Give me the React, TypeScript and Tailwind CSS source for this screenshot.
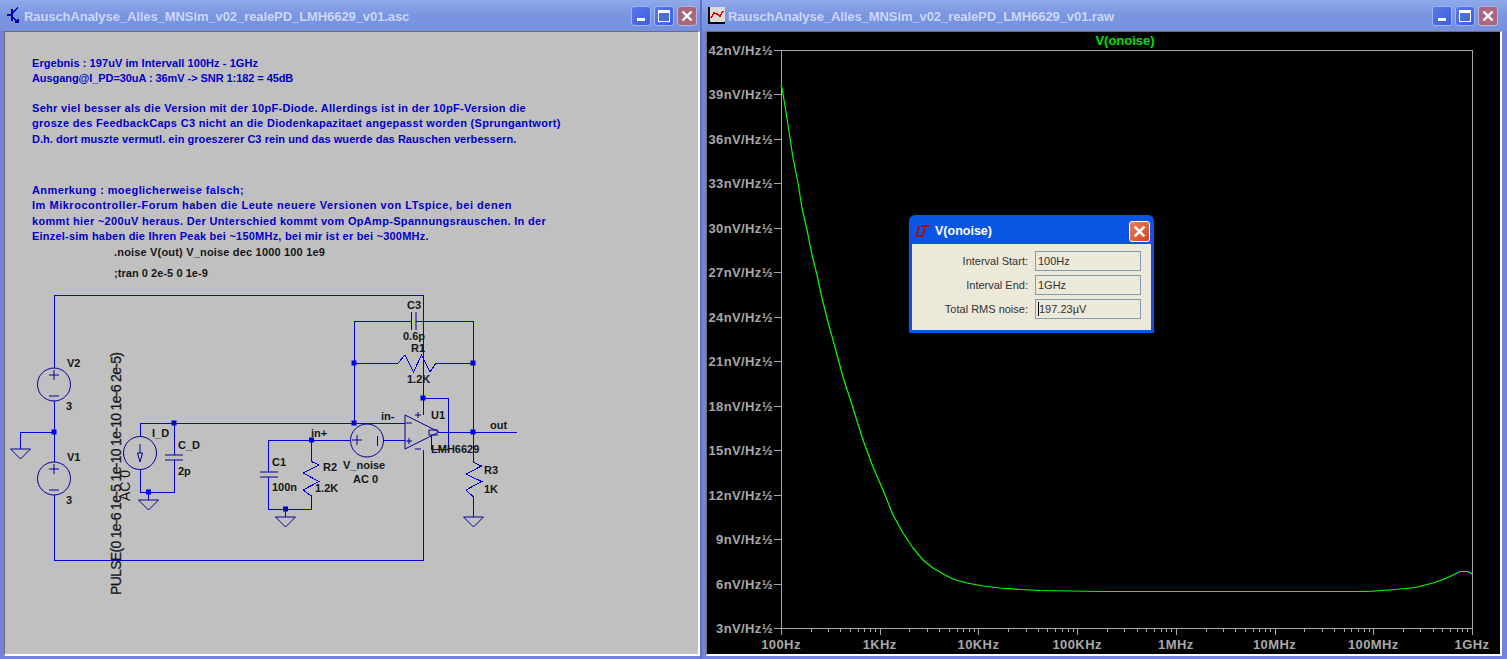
const wire = '#0000e0';
const sym = '#000099';

function CloseGlyph({ size = 12 }: { size?: number }) {
  return (
    <svg width={size} height={size} viewBox="0 0 12 12">
      <path d="M1.5 1.5L10.5 10.5M10.5 1.5L1.5 10.5" stroke="#fff" strokeWidth="2.4" />
    </svg>
  );
}

function CaptionButtons() {
  return (
    <div className="flex gap-[3px] shrink-0">
      <div className="w-[20px] h-[20px] rounded-[3px] border border-[#9db4ee] bg-gradient-to-br from-[#5a78e6] to-[#3c5fdc] flex items-end pl-[5px] pb-[4px]">
        <div className="w-[8px] h-[3px] bg-white" />
      </div>
      <div className="w-[20px] h-[20px] rounded-[3px] border border-[#9db4ee] bg-gradient-to-br from-[#5a78e6] to-[#3c5fdc] flex items-center justify-center">
        <div className="w-[12px] h-[12px] border border-white border-t-[3px]" />
      </div>
      <div className="w-[20px] h-[20px] rounded-[3px] border border-[#b9b4dc] bg-[#a9677f] flex items-center justify-center">
        <CloseGlyph />
      </div>
    </div>
  );
}

function SchematicIcon() {
  return (
    <svg width="14" height="17" viewBox="0 0 14 17" className="shrink-0" shapeRendering="crispEdges">
      <path d="M1 8H6M6 2V14M6 6L12 1M6 10L12 15M9 15H12V12" stroke="#0000a8" strokeWidth="1.4" fill="none" />
    </svg>
  );
}

function PlotIcon() {
  return (
    <svg width="17" height="17" viewBox="0 0 17 17" className="shrink-0" shapeRendering="crispEdges">
      <rect x="1" y="0" width="16" height="15" fill="#dcdcdc" />
      <path d="M1 0V16H17" stroke="#000" strokeWidth="1.2" fill="none" />
      <path d="M1 3V4M1 7V8M1 11V12M4 15V17M7 15V17M10 15V17M13 15V17" stroke="#000" />
      <path d="M3 11L6 6L9 7L12 9L15 4" stroke="#e00000" strokeWidth="1.6" fill="none" />
    </svg>
  );
}

function TitleBar({ icon, title, gap }: { icon: React.ReactNode; title: string; gap: string }) {
  return (
    <div className={`h-[31px] shrink-0 flex items-center ${gap} bg-gradient-to-b from-[#8fa9ea] via-[#7a95e1] to-[#7690df]`}>
      {icon}
      <span className="text-[13px] font-bold tracking-[-0.08px] text-[#cdd6f6] font-['Liberation_Sans',sans-serif] whitespace-nowrap pt-[3px]">
        {title}
      </span>
      <div className="flex-1" />
      <CaptionButtons />
    </div>
  );
}

function Gnd({ x, y }: { x: number; y: number }) {
  return <path d={`M${x - 10} ${y}H${x + 10}L${x} ${y + 10}Z`} fill="none" stroke={sym} />;
}

function Dot({ x, y }: { x: number; y: number }) {
  return <rect x={x - 2.5} y={y - 2.5} width="5" height="5" fill={wire} />;
}

function Lbl({ x, y, children }: { x: number; y: number; children: string }) {
  return (
    <text x={x} y={y} fontSize="11" fontWeight="700" fill="#161616" fontFamily="'Liberation Sans', sans-serif">
      {children}
    </text>
  );
}

function Schematic() {
  const wires = [
    'M54 295H423V415M423 450V560H54V495M54 401V462M54 295V368',
    'M54 432H20V449',
    'M140 437V423H405M174 423V455M174 460V492H140V469M148.5 492V500',
    'M350 440H268V472M268 477V509H311.5V496L303 490L319 481.5L303 473L319 465L311.5 461.5V440M285.5 509V517',
    'M383 440H405M439 432H517',
    'M354 423V321H411.5M416 321H473V462L481.5 466L466 474L481.5 481.5L466 490L473 496.5V517',
    'M354 363H398L405 355L413.5 372L421.5 355L430 372L436 363H473',
    'M431.5 435V449H448V398H423',
  ];
  return (
    <svg viewBox="5 285 693 369" width="693" height="369" className="block">
      <g shapeRendering="crispEdges">
        {wires.map((d, i) => (
          <path key={i} d={d} fill="none" stroke={wire} strokeWidth="1" />
        ))}
      </g>
      <g fill="none" stroke={sym}>
        <circle cx="54" cy="384.5" r="16.5" />
        <path d="M49 375H59M54 370V380M49 396H59" />
        <circle cx="54" cy="478.5" r="16.5" />
        <path d="M49 469H59M54 464V474M49 490H59" />
        <circle cx="140" cy="453" r="16.5" />
        <path d="M140 444V453M137.5 453H142.5L140 462Z" />
        <path d="M165 455H183M165 460H183" />
        <path d="M260 472H278M260 477H278" />
        <path d="M411.5 312V330M416 312V330" />
        <circle cx="367" cy="440.5" r="16.5" />
        <path d="M352 440H362M357 435V445M377.5 436V446" />
        <path d="M405 415V449L439 432Z" />
        <path d="M406 423H412M406 441H412M409 438V444M415 415H421M418 412V418M415 449H421" />
        <path d="M438 430H429V435H438" />
      </g>
      <Gnd x={20.5} y={449} />
      <Gnd x={148.5} y={500} />
      <Gnd x={285.5} y={517} />
      <Gnd x={473.5} y={517} />
      {[
        [54, 432],
        [174, 423],
        [148.5, 492],
        [311.5, 440],
        [285.5, 509],
        [354, 363],
        [354, 423],
        [473, 363],
        [473, 432],
        [423, 398],
      ].map(([x, y]) => (
        <Dot key={`${x}-${y}`} x={x} y={y} />
      ))}
      <Lbl x={67} y={367}>V2</Lbl>
      <Lbl x={66} y={410}>3</Lbl>
      <Lbl x={67} y={461}>V1</Lbl>
      <Lbl x={66} y={504}>3</Lbl>
      <Lbl x={152} y={437}>I_D</Lbl>
      <Lbl x={178} y={449}>C_D</Lbl>
      <Lbl x={178} y={475}>2p</Lbl>
      <Lbl x={272} y={466}>C1</Lbl>
      <Lbl x={272} y={491}>100n</Lbl>
      <Lbl x={323} y={471}>R2</Lbl>
      <Lbl x={315} y={492}>1.2K</Lbl>
      <Lbl x={311} y={437}>in+</Lbl>
      <Lbl x={343} y={469}>V_noise</Lbl>
      <Lbl x={353} y={483}>AC 0</Lbl>
      <Lbl x={381} y={420}>in-</Lbl>
      <Lbl x={407} y={309}>C3</Lbl>
      <Lbl x={403} y={340}>0.6p</Lbl>
      <Lbl x={411} y={352}>R1</Lbl>
      <Lbl x={407} y={383}>1.2K</Lbl>
      <Lbl x={431} y={419}>U1</Lbl>
      <Lbl x={431} y={453}>LMH6629</Lbl>
      <Lbl x={490} y={429}>out</Lbl>
      <Lbl x={484} y={474}>R3</Lbl>
      <Lbl x={484} y={493}>1K</Lbl>
      <text
        transform="translate(121 595) rotate(-90)"
        fontSize="14"
        fill="#161616"
        stroke="#161616"
        strokeWidth="0.25"
        fontFamily="'Liberation Sans', sans-serif"
        textLength="243"
      >
        PULSE(0 1e-6 1e-5 1e-10 1e-10 1e-6 2e-5)
      </text>
      <text
        transform="translate(130 501) rotate(-90)"
        fontSize="14"
        fill="#161616"
        fontFamily="'Liberation Sans', sans-serif"
      >
        AC 0
      </text>
    </svg>
  );
}

const yLabels = [42, 39, 36, 33, 30, 27, 24, 21, 18, 15, 12, 9, 6, 3];
const xLabels = ['100Hz', '1KHz', '10KHz', '100KHz', '1MHz', '10MHz', '100MHz', '1GHz'];
const curve =
  '781,85 782,88 786,112 790,138 793,158 798,183 802,208 807,230 812,255 817,275 822,298 827,318 833,340 843,377 853,408 863,440 873,467 883,490 893,515 903,533 913,548 923,560 933,568 943,574 953,579 967,583 983,586 1000,588 1020,589.5 1040,590.5 1100,591.5 1300,591.5 1367,591.5 1395,589.5 1415,587.5 1433,583 1447,578 1460,571.5 1468,571.5 1472,574';

function Plot() {
  const left = 781;
  const decade = (1472 - 781) / 7;
  const ticks: number[] = [];
  for (let d = 0; d < 7; d++) {
    for (let k = 2; k < 10; k++) ticks.push(left + decade * (d + Math.log10(k)));
  }
  return (
    <svg viewBox="707 32 793 622" width="793" height="622" className="block">
      <g shapeRendering="crispEdges" stroke="#a8a8a8" fill="none">
        <rect x="781.5" y="50.5" width="691" height="578" />
        {yLabels.map((_, i) => {
          const y = Math.round(50 + i * 44.46) + 0.5;
          return <path key={i} d={`M774 ${y}H781`} />;
        })}
        {ticks.map((x, i) => (
          <path key={i} d={`M${Math.round(x) + 0.5} 628V632`} />
        ))}
        {xLabels.map((_, i) => (
          <path key={i} d={`M${Math.round(left + decade * i) + 0.5} 628V635`} />
        ))}
      </g>
      <polyline points={curve} fill="none" stroke="#00ff00" strokeWidth="1.2" />
      <g fontFamily="'Liberation Sans', sans-serif" fontSize="13" fontWeight="700" fill="#a8a8a8" letterSpacing="0.4">
        {yLabels.map((v, i) => (
          <text key={v} x="773" y={Math.round(50 + i * 44.46) + 5} textAnchor="end">
            {v}nV/Hz½
          </text>
        ))}
        {xLabels.map((t, i) => (
          <text key={t} x={left + decade * i} y="649" textAnchor="middle">
            {t}
          </text>
        ))}
      </g>
      <text
        x="1125"
        y="45"
        textAnchor="middle"
        fontFamily="'Liberation Sans', sans-serif"
        fontSize="13"
        fontWeight="700"
        fill="#00e000"
      >
        V(onoise)
      </text>
    </svg>
  );
}

function Field({ label, value, caret }: { label: string; value: string; caret?: boolean }) {
  return (
    <div className="flex items-center h-[20px]">
      <div className="w-[112px] text-right text-[11px] text-[#333]">{label}</div>
      <div className="ml-[7px] w-[106px] h-[20px] border border-[#7f9db9] flex items-center pl-[2px] text-[11px] text-[#333]">
        {caret && <span className="w-px h-[14px] bg-black" />}
        {value}
      </div>
    </div>
  );
}

function NoiseDialog() {
  return (
    <div className="absolute left-[202px] top-[183px] w-[245px] h-[118px] rounded-t-[6px] bg-[#0a55e3] px-[3px] pb-[3px] flex flex-col font-['Liberation_Sans',sans-serif]">
      <div className="h-[29px] shrink-0 flex items-center gap-[5px] pl-[3px] pr-[1px] pt-[3px]">
        <svg width="15" height="12" viewBox="0 0 15 12" className="shrink-0">
          <path d="M4 1L1.5 11H8M6 1H14M10 1L8 11" fill="none" stroke="#a01010" strokeWidth="1.8" />
        </svg>
        <span className="text-[12.5px] font-bold text-white flex-1">V(onoise)</span>
        <div className="w-[21px] h-[21px] rounded-[3px] border border-white bg-gradient-to-br from-[#e8805c] to-[#d0431c] flex items-center justify-center">
          <CloseGlyph size={13} />
        </div>
      </div>
      <div className="flex-1 bg-[#ece9d8] pt-[7px] pl-[4px] flex flex-col gap-[4px]">
        <Field label="Interval Start:" value="100Hz" />
        <Field label="Interval End:" value="1GHz" />
        <Field label="Total RMS noise:" value="197.23µV" caret />
      </div>
    </div>
  );
}

export default function App() {
  return (
    <div className="w-[1507px] h-[659px] overflow-hidden flex bg-[#7383dd]">
      <div className="w-[700px] shrink-0 flex flex-col">
        <TitleBar
          icon={<SchematicIcon />}
          title="RauschAnalyse_Alles_MNSim_v02_realePD_LMH6629_v01.asc"
          gap="pl-[6px] pr-[3px] gap-[4px]"
        />
        <div className="flex-1 ml-1 mb-[3px] border-t border-l border-[#716f64] border-b-2 border-r-2 border-b-white border-r-white bg-[#c0c0c0] overflow-hidden font-['Liberation_Sans',sans-serif]">
          <div className="pt-[24px] pl-[27px] text-[11px] font-bold leading-[15.4px] text-[#0000c8] whitespace-nowrap h-[253px]">
            <p className="tracking-[0.07px]">Ergebnis : 197uV im Intervall 100Hz - 1GHz</p>
            <p className="tracking-[-0.07px]">Ausgang@I_PD=30uA : 36mV -&gt; SNR 1:182 = 45dB</p>
            <p className="mt-[14px] tracking-[0.3px]">Sehr viel besser als die Version mit der 10pF-Diode. Allerdings ist in der 10pF-Version die</p>
            <p className="tracking-[0.31px]">grosze des FeedbackCaps C3 nicht an die Diodenkapazitaet angepasst worden (Sprungantwort)</p>
            <p className="tracking-[0.05px]">D.h. dort muszte vermutl. ein groeszerer C3 rein und das wuerde das Rauschen verbessern.</p>
            <p className="mt-[36px] tracking-[0.4px]">Anmerkung : moeglicherweise falsch;</p>
            <p className="tracking-[0.52px]">Im Mikrocontroller-Forum haben die Leute neuere Versionen von LTspice, bei denen</p>
            <p className="tracking-[0.32px]">kommt hier ~200uV heraus. Der Unterschied kommt vom OpAmp-Spannungsrauschen. In der</p>
            <p className="tracking-[0.22px]">Einzel-sim haben die Ihren Peak bei ~150MHz, bei mir ist er bei ~300MHz.</p>
            <p className="pl-[82px] tracking-[0.18px] text-[#161616]">.noise V(out) V_noise dec 1000 100 1e9</p>
            <p className="pl-[82px] mt-[6px] tracking-[0.05px] text-[#161616]">;tran 0 2e-5 0 1e-9</p>
          </div>
          <Schematic />
        </div>
      </div>
      <div className="flex-1 flex flex-col border-l-2 border-[#5f6fd0]">
        <TitleBar
          icon={<PlotIcon />}
          title="RauschAnalyse_Alles_MNSim_v02_realePD_LMH6629_v01.raw"
          gap="pl-[6px] pr-[9px] gap-[3px]"
        />
        <div className="relative flex-1 ml-[4px] mr-[5px] mb-[3px] border-t border-l border-[#716f64] border-b-2 border-r-2 border-b-white border-r-white bg-black overflow-hidden">
          <Plot />
          <NoiseDialog />
        </div>
      </div>
    </div>
  );
}
